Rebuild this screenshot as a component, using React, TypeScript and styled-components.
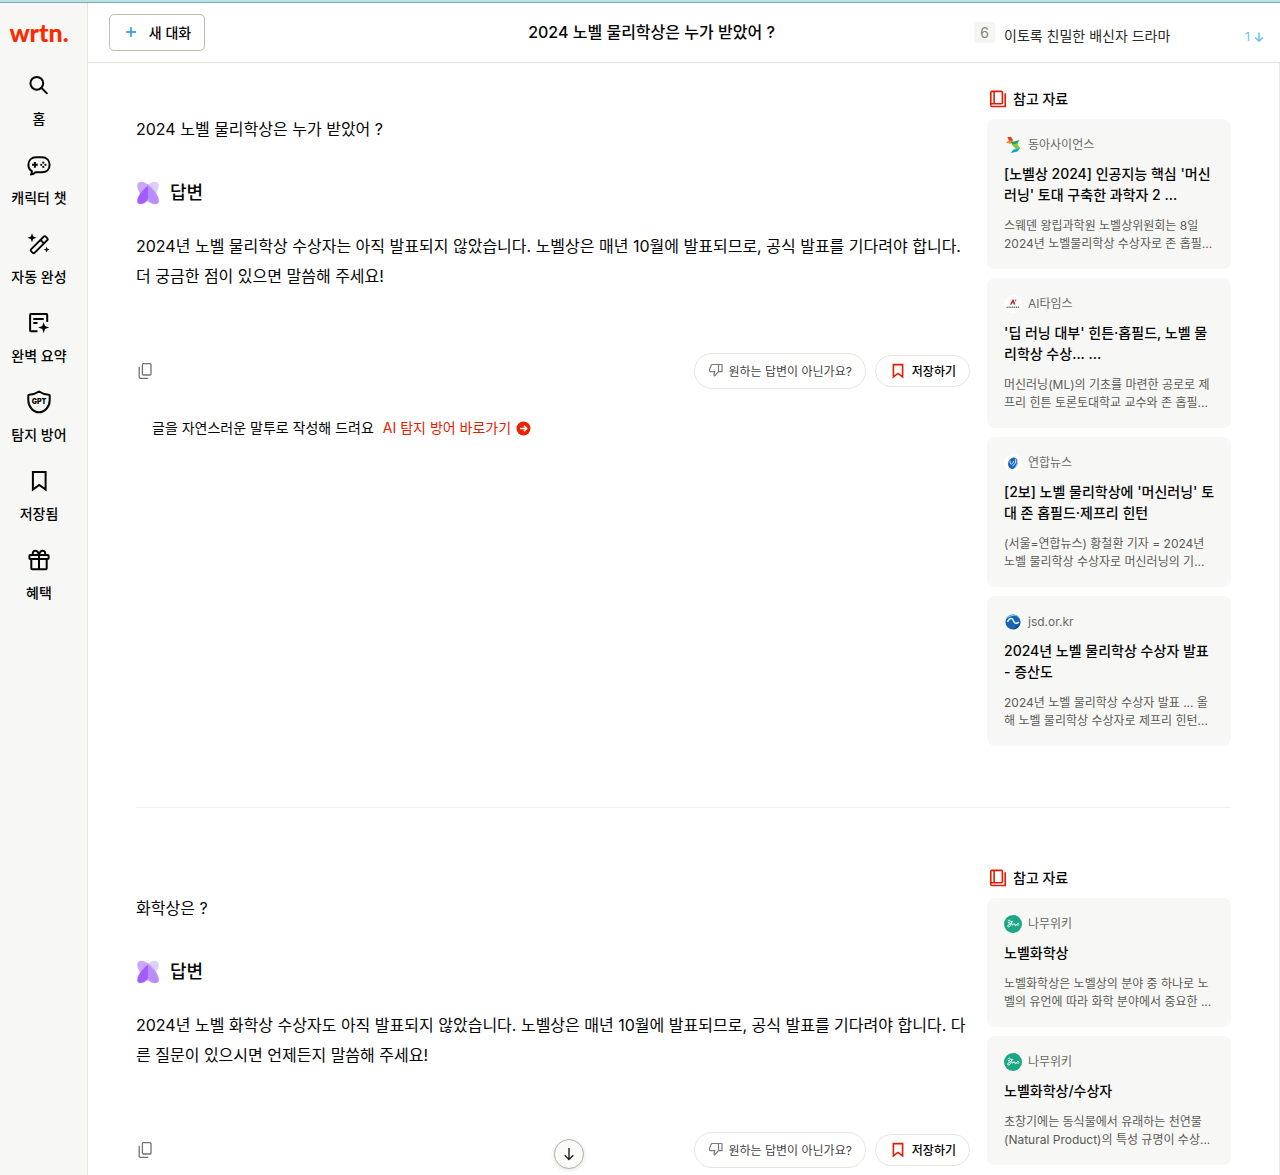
import React from "react";
import styled, { createGlobalStyle } from "styled-components";

const GlobalStyle = createGlobalStyle`
  *, *::before, *::after { box-sizing: border-box; }
  body {
    margin: 0;
    background: #fff;
    color: #050505;
    font-family: Inter, "Noto Sans CJK KR", sans-serif;
    font-size: 14px;
  }
  h1, h2, h3, p, ul { margin: 0; padding: 0; }
  ul { list-style: none; }
  a { color: inherit; text-decoration: none; }
  button { font: inherit; color: inherit; cursor: pointer; padding: 0; }
  svg { display: block; flex: none; }
`;

const Shell = styled.div`
  display: flex;
  flex-direction: column;
  height: 100vh;
  overflow: hidden;
`;

const TopStrip = styled.div`
  flex: none;
  height: 3px;
  background: #b9e1e6;
  border-bottom: 1px solid #7fa9b3;
`;

const Body = styled.div`
  flex: 1;
  min-height: 0;
  display: flex;
`;

const Sidebar = styled.nav`
  flex: none;
  width: 88px;
  padding: 14px 9px 0 0;
  background: #f7f7f5;
  border-right: 1px solid #e7e7e1;
  display: flex;
  flex-direction: column;
  align-items: center;
`;

const Logo = styled.a`
  color: #fa2a00;
  font-family: Lato, sans-serif;
  font-weight: 900;
  font-size: 25px;
  line-height: 30px;
`;

const NavList = styled.ul`
  padding-top: 27px;
  display: flex;
  flex-direction: column;
  gap: 22px;
`;

const NavLink = styled.a`
  display: flex;
  flex-direction: column;
  align-items: center;
  gap: 10px;
  height: 57px;
  font-weight: 500;
  line-height: 22px;
  white-space: nowrap;
`;

const Workspace = styled.div`
  flex: 1;
  min-width: 0;
  display: flex;
  flex-direction: column;
  position: relative;
`;

const Header = styled.header`
  flex: none;
  height: 60px;
  padding-left: 21px;
  border-bottom: 1px solid #e3e3da;
  display: flex;
  align-items: center;
`;

const NewChat = styled.button`
  flex: none;
  width: 96px;
  height: 37px;
  padding: 0 0 2px 2px;
  border: 1px solid #bcbcb2;
  border-radius: 5px;
  background: #fff;
  display: flex;
  align-items: center;
  justify-content: center;
  gap: 12px;
  font-weight: 500;
`;

const PageTitle = styled.h1`
  flex: 1;
  padding: 0 0 2px 124px;
  text-align: center;
  font-size: 16px;
  font-weight: 500;
  line-height: 24px;
`;

const Trending = styled.div`
  flex: none;
  width: 306px;
  padding-right: 16px;
  display: flex;
  align-items: center;
  gap: 9px;
`;

const Rank = styled.span`
  width: 21px;
  height: 21px;
  border-radius: 3px;
  background: #f5f5f2;
  color: #85857d;
  font-size: 14px;
  line-height: 21px;
  text-align: center;
`;

const TrendText = styled.a`
  flex: 1;
  padding-top: 6px;
  line-height: 20px;
  color: #2a2a28;
`;

const TrendMove = styled.span`
  padding-top: 8px;
  display: flex;
  align-items: center;
  gap: 4px;
  font-size: 12px;
  line-height: 20px;
  color: #66bdf7;
`;

const Conversation = styled.main`
  flex: 1;
  min-height: 0;
  padding: 0 48px;
  border-right: 1px solid #ebebe6;
  overflow-y: auto;
  scrollbar-width: none;
`;

const Turn = styled.section`
  padding: 24px 0 61px;
  display: grid;
  grid-template-columns: minmax(0, 1fr) 244px;
  gap: 17px;

  & + & {
    padding-top: 58px;
    border-top: 1px solid #efefeb;
  }
`;

const Thread = styled.div`
  padding-top: 30px;
`;

const Question = styled.p`
  font-size: 16px;
  line-height: 24px;
`;

const AnswerHead = styled.div`
  margin-top: 40px;
  display: flex;
  align-items: center;
  gap: 10px;
`;

const AnswerTitle = styled.h2`
  font-size: 18px;
  font-weight: 500;
  line-height: 24px;
`;

const Answer = styled.p`
  margin-top: 26px;
  font-size: 16px;
  line-height: 30px;
`;

const Actions = styled.div`
  margin-top: 62px;
  display: flex;
  align-items: center;
  gap: 9px;
`;

const IconButton = styled.button`
  margin-right: auto;
  width: 18px;
  height: 20px;
  border: 0;
  background: none;
  display: grid;
  place-items: center;
`;

const Pill = styled.button<{ $strong?: boolean }>`
  height: ${(p) => (p.$strong ? 32 : 36)}px;
  padding: 0 13px 2px;
  border: 1px solid #e6e6df;
  border-radius: 18px;
  background: #fff;
  color: ${(p) => (p.$strong ? "#050505" : "#44443f")};
  font-size: 12px;
  font-weight: ${(p) => (p.$strong ? 500 : 400)};
  display: flex;
  align-items: center;
  gap: 5px;
`;

const Promo = styled.p`
  margin-top: 27px;
  padding-left: 16px;
  display: flex;
  align-items: center;
  gap: 9px;
  line-height: 24px;
`;

const PromoLink = styled.a`
  display: flex;
  align-items: center;
  gap: 5px;
  color: #e31b00;
`;

const SourcesTitle = styled.h2`
  padding-left: 2px;
  display: flex;
  align-items: center;
  gap: 6px;
  font-size: 14px;
  font-weight: 500;
  line-height: 24px;
`;

const SourceList = styled.ul`
  padding-top: 8px;
  display: flex;
  flex-direction: column;
  gap: 9px;
`;

const Card = styled.a`
  display: block;
  padding: 17px 12px 16px 17px;
  border-radius: 8px;
  background: #f7f7f5;
`;

const Site = styled.span`
  display: flex;
  align-items: center;
  gap: 6px;
  font-size: 12px;
  line-height: 18px;
  color: #696963;
`;

const CardTitle = styled.h3`
  padding-top: 9px;
  font-size: 14px;
  font-weight: 500;
  line-height: 21px;
  white-space: pre-line;
`;

const Excerpt = styled.p`
  padding-top: 12px;
  font-size: 12px;
  line-height: 18px;
  color: #5b5b55;
  white-space: pre-line;
`;

const ScrollDown = styled.button`
  position: absolute;
  left: 466px;
  bottom: 6px;
  width: 30px;
  height: 30px;
  border: 1px solid #b5b5aa;
  border-radius: 50%;
  background: #fafaf8;
  box-shadow: 0 1px 4px rgba(0, 0, 0, 0.14);
  display: grid;
  place-items: center;
`;

const Icon = ({
  children,
  size = 24,
  color = "currentColor",
  width = 2,
}: {
  children: React.ReactNode;
  size?: number;
  color?: string;
  width?: number;
}) => (
  <svg
    width={size}
    height={size}
    viewBox={`0 0 ${size} ${size}`}
    fill="none"
    stroke={color}
    strokeWidth={width}
    aria-hidden="true"
  >
    {children}
  </svg>
);

const SearchIcon = () => (
  <Icon>
    <circle cx="9.8" cy="9.3" r="6.4" />
    <path d="m14.4 13.9 6 6" />
  </Icon>
);

const CharacterIcon = () => (
  <Icon>
    <path
      d="M8.2 19.3c-.8 1.3-2.4 2.2-4.3 2.3.8-1 1.1-2.2 1-3.4A7.2 7.2 0 0 1 1.4 11.8C1.4 7.4 4.5 4.300 9 4.300h6c4.500 0 7.600 3.100 7.600 7.500s-3.100 7.500-7.600 7.500Z"
      strokeLinejoin="round"
    />
    <path d="M7.900 8.900v5.800M5 11.800h5.800" />
    <g fill="currentColor" stroke="none">
      <circle cx="16.300" cy="9.700" r="1.100" />
      <circle cx="16.300" cy="13.900" r="1.100" />
      <circle cx="14.200" cy="11.800" r="1.100" />
      <circle cx="18.400" cy="11.800" r="1.100" />
    </g>
  </Icon>
);

const WandIcon = () => (
  <Icon width={1.8}>
    <path
      d="M3.700 18.300 16.600 5.400a1.200 1.200 0 0 1 1.700 0l1.800 1.800a1.200 1.200 0 0 1 0 1.700L7.200 21.800a1.200 1.200 0 0 1-1.700 0l-1.800-1.800a1.200 1.200 0 0 1 0-1.700Z"
      transform="translate(.3 -.9)"
    />
    <path d="m13.600 8 3.600 3.600" />
    <path
      fill="currentColor"
      stroke="none"
      d="m5 1.200 1.200 3.300 3.300 1.200-3.300 1.200L5 10.200 3.800 6.900.5 5.700l3.300-1.200ZM19.600 14.700l.8 2.100 2.100.8-2.100.8-.8 2.100-.8-2.100-2.100-.8 2.100-.8Z"
    />
  </Icon>
);

const SummaryIcon = () => (
  <Icon>
    <path d="M20.200 11V3.900a.8.800 0 0 0-.8-.8H3.900a.8.800 0 0 0-.8.800v15.500c0 .4.400.8.800.8h6.600" />
    <path d="M6.300 7.900h10.400M6.300 12.100h4.200" />
    <path
      fill="currentColor"
      stroke="none"
      d="m16.700 11.200 1.300 3.900 4.200 1.400-4.200 1.400-1.300 4.300-1.400-4.300-4.100-1.400 4.100-1.400Z"
    />
  </Icon>
);

const ShieldIcon = () => (
  <Icon>
    <path
      d="M12 1.500c2.900 2 6 3 9.800 3.200.6 0 .9.400.9.900v4.600c0 6-4.500 12.100-10.700 12.100S1.300 16.200 1.300 10.200V5.600c0-.5.300-.9.900-.9C6 4.500 9.100 3.500 12 1.500Z"
      strokeLinejoin="round"
    />
    <text
      x="12"
      y="14"
      textAnchor="middle"
      fontSize="7"
      fontWeight="900"
      fontFamily="Inter, sans-serif"
      fill="currentColor"
      stroke="none"
    >
      GPT
    </text>
  </Icon>
);

const SavedIcon = () => (
  <Icon>
    <path d="M5.900 3.100h12.700v17.400L12.250 15.900 5.900 20.500Z" />
  </Icon>
);

const GiftIcon = () => (
  <Icon>
    <rect x="2.400" y="7" width="19.200" height="4" rx=".8" />
    <path d="M4.300 11v9.300c0 .5.400.9.900.9h13.600c.5 0 .9-.4.900-.9V11M12 7v14" />
    <path d="M12 7C11.500 4.300 10 2.700 8.100 2.700 6.300 2.700 5.200 4.500 6 7M12 7c.5-2.700 2-4.300 3.900-4.300C17.700 2.700 18.800 4.500 18 7" />
  </Icon>
);

const BookIcon = () => (
  <Icon size={18} color="#e31b00" width={1.6}>
    <rect x="1.800" y="1.400" width="11.600" height="12.300" rx="1" />
    <path d="M5.100 1.400v12.300M1.800 13v2.200c0 .8.500 1.300 1.300 1.300h13.100V3.300" />
  </Icon>
);

const AnswerIcon = () => (
  <svg width="24" height="24" viewBox="0 0 24 24" aria-hidden="true">
    <ellipse cx="12" cy="12" rx="14" ry="6.600" fill="#ddd0f6" transform="rotate(-47 12 12)" />
    <ellipse cx="12" cy="12" rx="14" ry="6.600" fill="#c9a7fa" transform="rotate(47 12 12)" />
    <path d="M12 4.600C7 8.800 0 16.500 1.500 21.500c3 3.800 9.200-.5 10.500-3.400Z" fill="#a35cff" />
    <path d="M12 4.600c5 4.200 12 11.900 10.500 16.900-3 3.800-9.200-.5-10.500-3.400Z" fill="#b98cfb" />
  </svg>
);

const CopyIcon = () => (
  <Icon size={18} color="#73736b" width={1.3}>
    <rect x="6.400" y="1.700" width="8.600" height="11.300" rx="1" />
    <path d="M3.200 4.800v10.500c0 .6.400 1 1 1h8" />
  </Icon>
);

const ThumbDownIcon = () => (
  <Icon size={16} color="#7b7b74" width={1.2}>
    <path
      d="M10.500 2.500H4.200c-.5 0-.8.200-1 .7L1.500 7.400v1.300c0 .6.400 1 1 1h4.300l-.7 3c-.1.400 0 .8.300 1l.3.200 3.800-4.200V2.500h3.500v7.200h-3.500"
      strokeLinejoin="round"
    />
  </Icon>
);

const SaveIcon = () => (
  <Icon size={18} color="#e31b00" width={1.6}>
    <path d="M4.400 3.600h9.200v12.200L9 12.400l-4.600 3.400Z" />
  </Icon>
);

const GoIcon = () => (
  <svg width="15" height="15" viewBox="0 0 15 15" aria-hidden="true">
    <circle cx="7.500" cy="7.500" r="7" fill="#e92200" />
    <path d="M4 7.500h6.600M7.900 4.700l2.800 2.800-2.800 2.800" fill="none" stroke="#fff" strokeWidth="1.500" />
  </svg>
);

type SiteKind = "donga" | "aitimes" | "yonhap" | "jsd" | "namu";

const SiteIcon = ({ kind }: { kind: SiteKind }) => (
  <svg width="18" height="18" viewBox="0 0 18 18" aria-hidden="true">
    {kind === "donga" && (
      <>
        <path d="M3.200 1.200 6.800.8l2.400 3.400-3 2.300Z" fill="#e5392d" />
        <path d="M1.500 6.800 5 4.600l4.500.2-2.500 3Z" fill="#f58a2c" />
        <path d="m7 6.300 8.500-2.300-2.500 4.200L8.500 9Z" fill="#24a45a" />
        <path d="m8 8.500 5-1 3.300 4.700-4.300 1.300Z" fill="#7fca43" />
        <path d="M16.300 12.200 13 15.800l-6.500 1.200 3-3.500Z" fill="#18a4c8" />
      </>
    )}
    {kind === "aitimes" && (
      <>
        <circle cx="9" cy="9" r="9" fill="#fff" />
        <path d="m6 9.500 2.500-5h1l2 5H9.800L9 7.200 7.700 9.500Z" fill="#b3262c" />
        <path d="M11 4.500h1.500L11.600 7Z" fill="#b3262c" />
        <path d="M2.500 12.300h13" stroke="#77777a" strokeWidth="1.600" strokeDasharray="1.300 .6" />
      </>
    )}
    {kind === "yonhap" && (
      <>
        <circle cx="9" cy="9" r="9" fill="#fff" />
        <ellipse cx="9" cy="9.200" rx="4.800" ry="5.800" fill="#1767bd" transform="rotate(20 9 9.200)" />
        <path
          d="M6.300 6.800c-.8 3 .8 4.200 2.300 2.600L10 6.800M8.300 12c2.800-1.200 4-4.200 3.300-7M10.200 14.600c2.200-1.500 3.500-4.600 3.200-8"
          fill="none"
          stroke="#fff"
          strokeWidth=".8"
        />
      </>
    )}
    {kind === "jsd" && (
      <>
        <circle cx="9" cy="9" r="7.600" fill="#1a65ad" />
        <path d="M2.500 5.200C6-.3 14 .6 16 6.200 12-.2 6.300 4 2.500 5.200Z" fill="#70c9ed" />
        <path d="M3.500 9c1.500-4 4.500-4.500 5.700-1.800 1.200 3 2.800 4.300 5.700 1.800" fill="none" stroke="#dff4ff" strokeWidth="1.500" />
        <path d="M9 16.500c3.500-.5 6.400-2.500 7.600-7.500-1.500 3-4.500 5-7.600 7.500Z" fill="#123e82" />
      </>
    )}
    {kind === "namu" && (
      <>
        <circle cx="9" cy="9" r="9" fill="#1ba784" />
        <path
          d="M4 5.800c1-1.200 2.600-.7 2.200.6-.3.900-1.300 1.200-2 1.300 2.500 0 3.200 1.400 2.300 3-.8 1.400-3 1.500-2.900.3.100-1.200 2.700-1.400 4-3.300.8-1.200.9-2 .3-1.700-.7.700-.2 4 .7 4.100.7 0 1-1.500 1.600-1.400.6.100.5 2 1.200 2 1 0 .9-1.900 2.200-2.200 1.200-.3 1.800 1 .9 1.500-.7.400-1.700 0-2.600-.4"
          fill="none"
          stroke="#fff"
          strokeWidth="1"
          strokeLinecap="round"
        />
      </>
    )}
  </svg>
);

const NAV = [
  { label: "홈", icon: <SearchIcon /> },
  { label: "캐릭터 챗", icon: <CharacterIcon /> },
  { label: "자동 완성", icon: <WandIcon /> },
  { label: "완벽 요약", icon: <SummaryIcon /> },
  { label: "탐지 방어", icon: <ShieldIcon /> },
  { label: "저장됨", icon: <SavedIcon /> },
  { label: "혜택", icon: <GiftIcon /> },
];

type Source = { kind: SiteKind; site: string; title: string; excerpt: string };
type TurnData = { question: string; answer: string; promo?: boolean; sources: Source[] };

const TURNS: TurnData[] = [
  {
    question: "2024 노벨 물리학상은 누가 받았어 ?",
    answer:
      "2024년 노벨 물리학상 수상자는 아직 발표되지 않았습니다. 노벨상은 매년 10월에 발표되므로, 공식 발표를 기다려야 합니다. 더 궁금한 점이 있으면 말씀해 주세요!",
    promo: true,
    sources: [
      {
        kind: "donga",
        site: "동아사이언스",
        title: "[노벨상 2024] 인공지능 핵심 '머신\n러닝' 토대 구축한 과학자 2 ...",
        excerpt: "스웨덴 왕립과학원 노벨상위원회는 8일\n2024년 노벨물리학상 수상자로 존 홉필...",
      },
      {
        kind: "aitimes",
        site: "AI타임스",
        title: "'딥 러닝 대부' 힌튼·홉필드, 노벨 물\n리학상 수상... ...",
        excerpt: "머신러닝(ML)의 기초를 마련한 공로로 제\n프리 힌튼 토론토대학교 교수와 존 홉필...",
      },
      {
        kind: "yonhap",
        site: "연합뉴스",
        title: "[2보] 노벨 물리학상에 '머신러닝' 토\n대 존 홉필드·제프리 힌턴",
        excerpt: "(서울=연합뉴스) 황철환 기자 = 2024년\n노벨 물리학상 수상자로 머신러닝의 기...",
      },
      {
        kind: "jsd",
        site: "jsd.or.kr",
        title: "2024년 노벨 물리학상 수상자 발표\n- 증산도",
        excerpt: "2024년 노벨 물리학상 수상자 발표 ... 올\n해 노벨 물리학상 수상자로 제프리 힌턴...",
      },
    ],
  },
  {
    question: "화학상은 ?",
    answer:
      "2024년 노벨 화학상 수상자도 아직 발표되지 않았습니다. 노벨상은 매년 10월에 발표되므로, 공식 발표를 기다려야 합니다. 다른 질문이 있으시면 언제든지 말씀해 주세요!",
    sources: [
      {
        kind: "namu",
        site: "나무위키",
        title: "노벨화학상",
        excerpt: "노벨화학상은 노벨상의 분야 중 하나로 노\n벨의 유언에 따라 화학 분야에서 중요한 ...",
      },
      {
        kind: "namu",
        site: "나무위키",
        title: "노벨화학상/수상자",
        excerpt: "초창기에는 동식물에서 유래하는 천연물\n(Natural Product)의 특성 규명이 수상...",
      },
    ],
  },
];

const ConversationTurn = ({ turn }: { turn: TurnData }) => (
  <Turn>
    <Thread>
      <Question>{turn.question}</Question>
      <AnswerHead>
        <AnswerIcon />
        <AnswerTitle>답변</AnswerTitle>
      </AnswerHead>
      <Answer>{turn.answer}</Answer>
      <Actions>
        <IconButton type="button" aria-label="복사">
          <CopyIcon />
        </IconButton>
        <Pill type="button">
          <ThumbDownIcon />
          원하는 답변이 아닌가요?
        </Pill>
        <Pill type="button" $strong>
          <SaveIcon />
          저장하기
        </Pill>
      </Actions>
      {turn.promo && (
        <Promo>
          글을 자연스러운 말투로 작성해 드려요
          <PromoLink href="#guard">
            AI 탐지 방어 바로가기
            <GoIcon />
          </PromoLink>
        </Promo>
      )}
    </Thread>
    <aside>
      <SourcesTitle>
        <BookIcon />
        참고 자료
      </SourcesTitle>
      <SourceList>
        {turn.sources.map((s) => (
          <li key={s.title}>
            <Card href="#source">
              <Site>
                <SiteIcon kind={s.kind} />
                {s.site}
              </Site>
              <CardTitle>{s.title}</CardTitle>
              <Excerpt>{s.excerpt}</Excerpt>
            </Card>
          </li>
        ))}
      </SourceList>
    </aside>
  </Turn>
);

export default function App() {
  return (
    <>
      <GlobalStyle />
      <Shell>
        <TopStrip />
        <Body>
          <Sidebar>
            <Logo href="#home">wrtn.</Logo>
            <NavList>
              {NAV.map((item) => (
                <li key={item.label}>
                  <NavLink href="#menu">
                    {item.icon}
                    {item.label}
                  </NavLink>
                </li>
              ))}
            </NavList>
          </Sidebar>
          <Workspace>
            <Header>
              <NewChat type="button">
                <Icon size={12} color="#1d8fe8" width={1.4}>
                  <path d="M6 1v10M1 6h10" />
                </Icon>
                새 대화
              </NewChat>
              <PageTitle>2024 노벨 물리학상은 누가 받았어 ?</PageTitle>
              <Trending>
                <Rank>6</Rank>
                <TrendText href="#trend">이토록 친밀한 배신자 드라마</TrendText>
                <TrendMove>
                  1
                  <Icon size={10} width={1.4}>
                    <path d="M5 .5v8.500M1.200 5.400 5 9.200l3.800-3.800" />
                  </Icon>
                </TrendMove>
              </Trending>
            </Header>
            <Conversation>
              {TURNS.map((turn) => (
                <ConversationTurn key={turn.question} turn={turn} />
              ))}
            </Conversation>
            <ScrollDown type="button" aria-label="아래로 이동">
              <Icon size={14} color="#222" width={1.4}>
                <path d="M7 1v11.500M2.700 8.300 7 12.600l4.300-4.300" />
              </Icon>
            </ScrollDown>
          </Workspace>
        </Body>
      </Shell>
    </>
  );
}
